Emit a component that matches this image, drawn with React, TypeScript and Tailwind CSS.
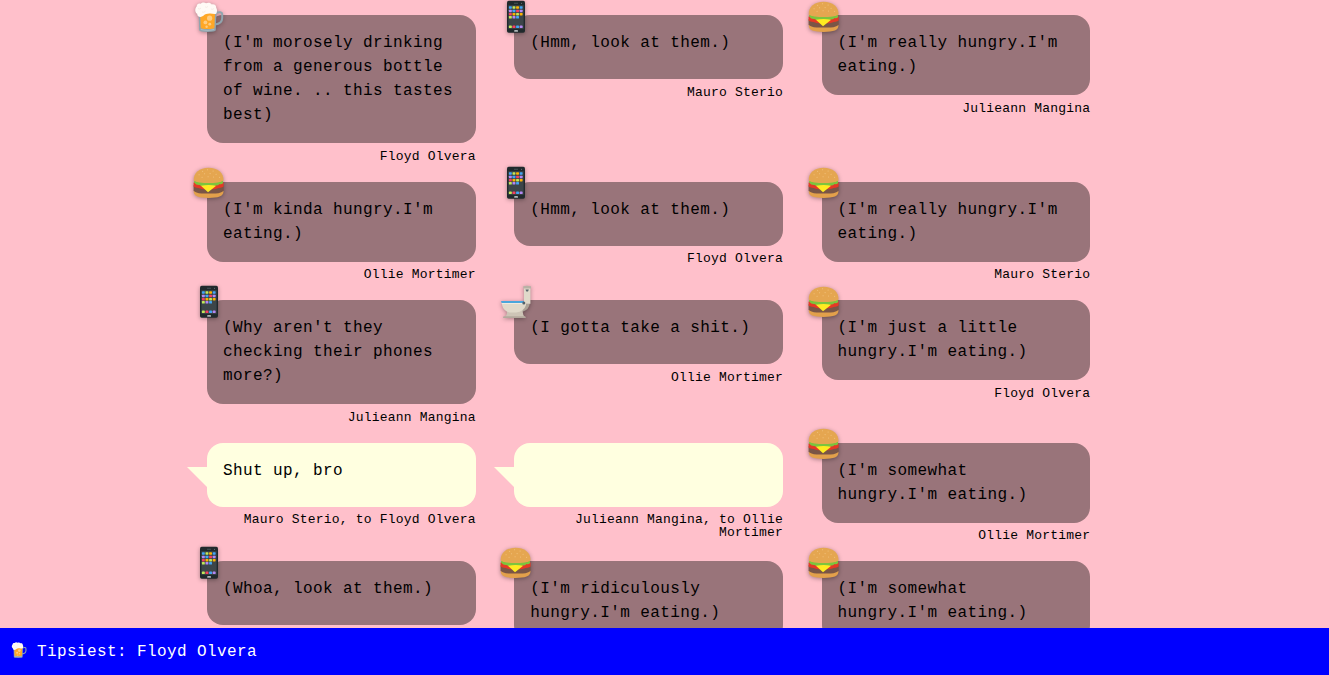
type Kind = "beer" | "phone" | "burger" | "toilet" | "speech";
type Item = { k: Kind; t: string; n: string };

const items: Item[] = [
  { k: "beer", t: "(I'm morosely drinking from a generous bottle of wine. .. this tastes best)", n: "Floyd Olvera" },
  { k: "phone", t: "(Hmm, look at them.)", n: "Mauro Sterio" },
  { k: "burger", t: "(I'm really hungry.I'm eating.)", n: "Julieann Mangina" },
  { k: "burger", t: "(I'm kinda hungry.I'm eating.)", n: "Ollie Mortimer" },
  { k: "phone", t: "(Hmm, look at them.)", n: "Floyd Olvera" },
  { k: "burger", t: "(I'm really hungry.I'm eating.)", n: "Mauro Sterio" },
  { k: "phone", t: "(Why aren't they checking their phones more?)", n: "Julieann Mangina" },
  { k: "toilet", t: "(I gotta take a shit.)", n: "Ollie Mortimer" },
  { k: "burger", t: "(I'm just a little hungry.I'm eating.)", n: "Floyd Olvera" },
  { k: "speech", t: "Shut up, bro", n: "Mauro Sterio, to Floyd Olvera" },
  { k: "speech", t: "", n: "Julieann Mangina, to Ollie Mortimer" },
  { k: "burger", t: "(I'm somewhat hungry.I'm eating.)", n: "Ollie Mortimer" },
  { k: "phone", t: "(Whoa, look at them.)", n: "Floyd Olvera" },
  { k: "burger", t: "(I'm ridiculously hungry.I'm eating.)", n: "Mauro Sterio" },
  { k: "burger", t: "(I'm somewhat hungry.I'm eating.)", n: "Julieann Mangina" },
];

function Beer() {
  return (
    <g>
      <path d="M27 13.2Q34.2 10.6 34.2 14.5V18Q34.2 23.8 27 24.4" fill="none" stroke="#90a4ae" strokeWidth="2" />
      <path d="M10.6 13H28.4L27.8 30.3Q27.2 32 19.5 32T11.2 30.3Z" fill="#90a4ae" />
      <path d="M12.2 13H27L26.4 28.2Q19.5 30 12.7 28.2Z" fill="#ffa726" />
      <path d="M12.8 29Q19.5 30.8 26.2 29V30.1Q19.5 31.5 12.8 30.1Z" fill="#b0bec5" />
      <circle cx="21.6" cy="18.2" r="2.6" fill="#ffcc80" />
      <circle cx="17.4" cy="22.4" r="1.9" fill="#ffcc80" />
      <circle cx="21.8" cy="24.2" r="1.4" fill="#ffcc80" />
      <circle cx="18.6" cy="26.8" r="1.2" fill="#ffcc80" />
      <path d="M8.6 6.6C8.8 4 10.8 3 12.6 3.8C14.2 2 16.6 2 18 3.3C19.8 2.2 22.8 2.6 23.8 4.4C26.3 3.8 28.4 5.2 28.1 7.5C29.4 9.3 29.2 12 28.2 13.8C26 14.6 23.5 13.2 21.5 13.6C18.8 13.8 17.4 13.8 15.4 15.8C13.2 17.8 9 17.2 9.2 13.8C6.6 12.2 6.8 8.6 8.6 6.6Z" fill="#fffaf6" />
      <path d="M10 8.5Q11.5 9.8 13 8M17 6.8Q18.5 8 20 6.5M23 9Q24.8 10 26 8.5M14 12Q16 13 17.5 11" stroke="#f0e6e0" strokeWidth=".7" fill="none" />
    </g>
  );
}

const BLUE = "#42a5f5";
const LIME = "#c0e85a";
const AMBER = "#ffb300";
const PURPLE = "#b388f5";
const RED = "#f5405f";
const apps: { y: number; c: string[] }[] = [
  { y: 6.2, c: [BLUE, LIME, AMBER, BLUE] },
  { y: 9.7, c: [PURPLE, BLUE, RED, PURPLE] },
  { y: 12.9, c: [RED, AMBER, LIME, AMBER] },
  { y: 16, c: [LIME, PURPLE, BLUE] },
  { y: 25.6, c: [LIME, RED, BLUE, PURPLE] },
];

function Phone() {
  return (
    <g>
      <rect x="12" y=".8" width="18" height="32" rx="1.7" fill="#20292c" />
      <rect x="13.4" y="5.2" width="15.2" height="23.6" fill="#3c4549" />
      <rect x="19" y="2.8" width="4" height=".8" fill="#4e5b60" />
      <circle cx="26.5" cy="3.3" r=".5" fill="#78868b" />
      <rect x="19.2" y="30" width="3.8" height="1.8" rx=".4" fill="#aeb6b8" />
      {apps.map((r) =>
        r.c.map((c, i) => <rect key={i + "-" + r.y} x={13.9 + i * 3.6} y={r.y} width="2.9" height="2.5" rx=".6" fill={c} />),
      )}
    </g>
  );
}

function Burger() {
  return (
    <g transform="translate(.6 -.2)">
      <path d="M5.2 25H34.8C35.4 30.4 30 32.2 20 32.2S4.6 30.4 5.2 25Z" fill="#e2a04b" />
      <path d="M5 19.5H35V24.6C33.8 26.2 31 27.6 27 27.6H13C9 27.6 6.2 26.2 5 24.6Z" fill="#7a5546" />
      <path d="M5 17Q5.4 16 7 16H33Q34.6 16 35 17V20.6C33.6 22.2 30.4 21.6 28.5 22.6C25.5 23.8 14.5 23.8 11.5 22.6C9.6 21.6 6.4 22.2 5 20.6Z" fill="#e53926" />
      <path d="M5.6 14.6H34.4V17.4Q33 18.8 31 18.2Q29.4 20.2 27 19.4Q24.8 21.4 22 20.2Q19 21.8 16 20.2Q13 21.2 11 19.2Q8 19.8 5.6 17Z" fill="#7cc43e" />
      <path d="M12.3 20Q20 18.4 27.6 20L19.4 26.4Z" fill="#ffeb21" />
      <path d="M5.1 14.6C4.7 7 11 2 20 2S35.3 7 34.9 14.6Q33 16 29 16.6Q20 17.8 11 16.6Q7 16 5.1 14.6Z" fill="#e5a650" />
      <g fill="#f3c581">
        <circle cx="14" cy="5.5" r=".55" /><circle cx="19" cy="4" r=".55" /><circle cx="24.5" cy="5.2" r=".55" />
        <circle cx="10.5" cy="9" r=".55" /><circle cx="16" cy="8" r=".55" /><circle cx="21.5" cy="7.8" r=".55" />
        <circle cx="27.5" cy="8.5" r=".55" /><circle cx="13.5" cy="11.5" r=".55" /><circle cx="19.5" cy="11" r=".55" />
        <circle cx="25" cy="11.2" r=".55" /><circle cx="31" cy="11.5" r=".55" />
      </g>
    </g>
  );
}

function Toilet() {
  return (
    <g>
      <path d="M29 18.6H34.8Q34 24.8 28 26.5H24Z" fill="#ada397" />
      <path d="M12 25H27.6Q27.5 30.2 30.5 32.8H8.5Q12.8 30.5 12 25Z" fill="#cdc4b6" />
      <path d="M8.5 31.3H30.2L30.8 33H8Z" fill="#b3a99c" />
      <path d="M7 17.6H31V20Q29 26.6 21 27.5H14.5Q8.5 26 7 20Z" fill="#e0d9ca" />
      <path d="M6 15.9H29V18H6.6Z" fill="#4aa6dc" />
      <path d="M6.5 18H29V18.8H6.8Z" fill="#f4efe4" />
      <path d="M29 3H35.4V18.8H29Z" fill="#e0d9ca" />
      <path d="M28.2 1.2Q32 .3 36 1.2V3.4H28.2Z" fill="#b9b1a5" />
      <circle cx="28.8" cy="18" r="1.5" fill="#53616a" />
      <path d="M30.5 4.6H33.8L33 6.4H31.3Z" fill="#59666d" />
    </g>
  );
}

const drawings = { beer: Beer, phone: Phone, burger: Burger, toilet: Toilet };

function Bubble({ k, t, n }: Item) {
  const Drawing = k === "speech" ? null : drawings[k];
  return (
    <div>
      <div className={"relative min-h-16 rounded-2xl p-4 text-[16px] leading-6 tracking-[0.4px] " + (Drawing ? "bg-[#99747a]" : "bg-[#ffffe0]")}>
        {Drawing ? (
          <svg className="absolute -top-[15.3px] -left-[19px] overflow-visible drop-shadow-[0_1px_2px_rgba(0,0,0,0.35)]" width="40" height="40" viewBox="0 0 40 40">
            <Drawing />
          </svg>
        ) : (
          <svg className="absolute top-6 -left-5" width="20" height="20">
            <path d="M0 0H20V20Z" fill="#ffffe0" />
          </svg>
        )}
        <p>{t}</p>
      </div>
      <div className="mt-[6.75px] text-right text-[13px] leading-[13px] tracking-[0.2px]">{n}</div>
    </div>
  );
}

export default function App() {
  return (
    <div className="flex h-[675px] flex-col overflow-hidden bg-[#ffc0cb] font-['Liberation_Mono',monospace] text-black">
      <main className="min-h-0 flex-1 overflow-hidden pt-[15px]">
        <div className="ml-[207px] grid w-[883.3px] grid-cols-3 gap-x-[38.6px] gap-y-[18.8px]">
          {items.map((it, i) => (
            <Bubble key={i} {...it} />
          ))}
        </div>
      </main>
      <footer className="flex h-[47px] shrink-0 items-center bg-[#0000ff] pl-[8px] text-[16px] tracking-[0.4px] text-white">
        <svg className="mr-[8px] mb-[2px]" width="21" height="19" viewBox="0 0 40 36">
          <Beer />
        </svg>
        <span>Tipsiest: Floyd Olvera</span>
      </footer>
    </div>
  );
}
